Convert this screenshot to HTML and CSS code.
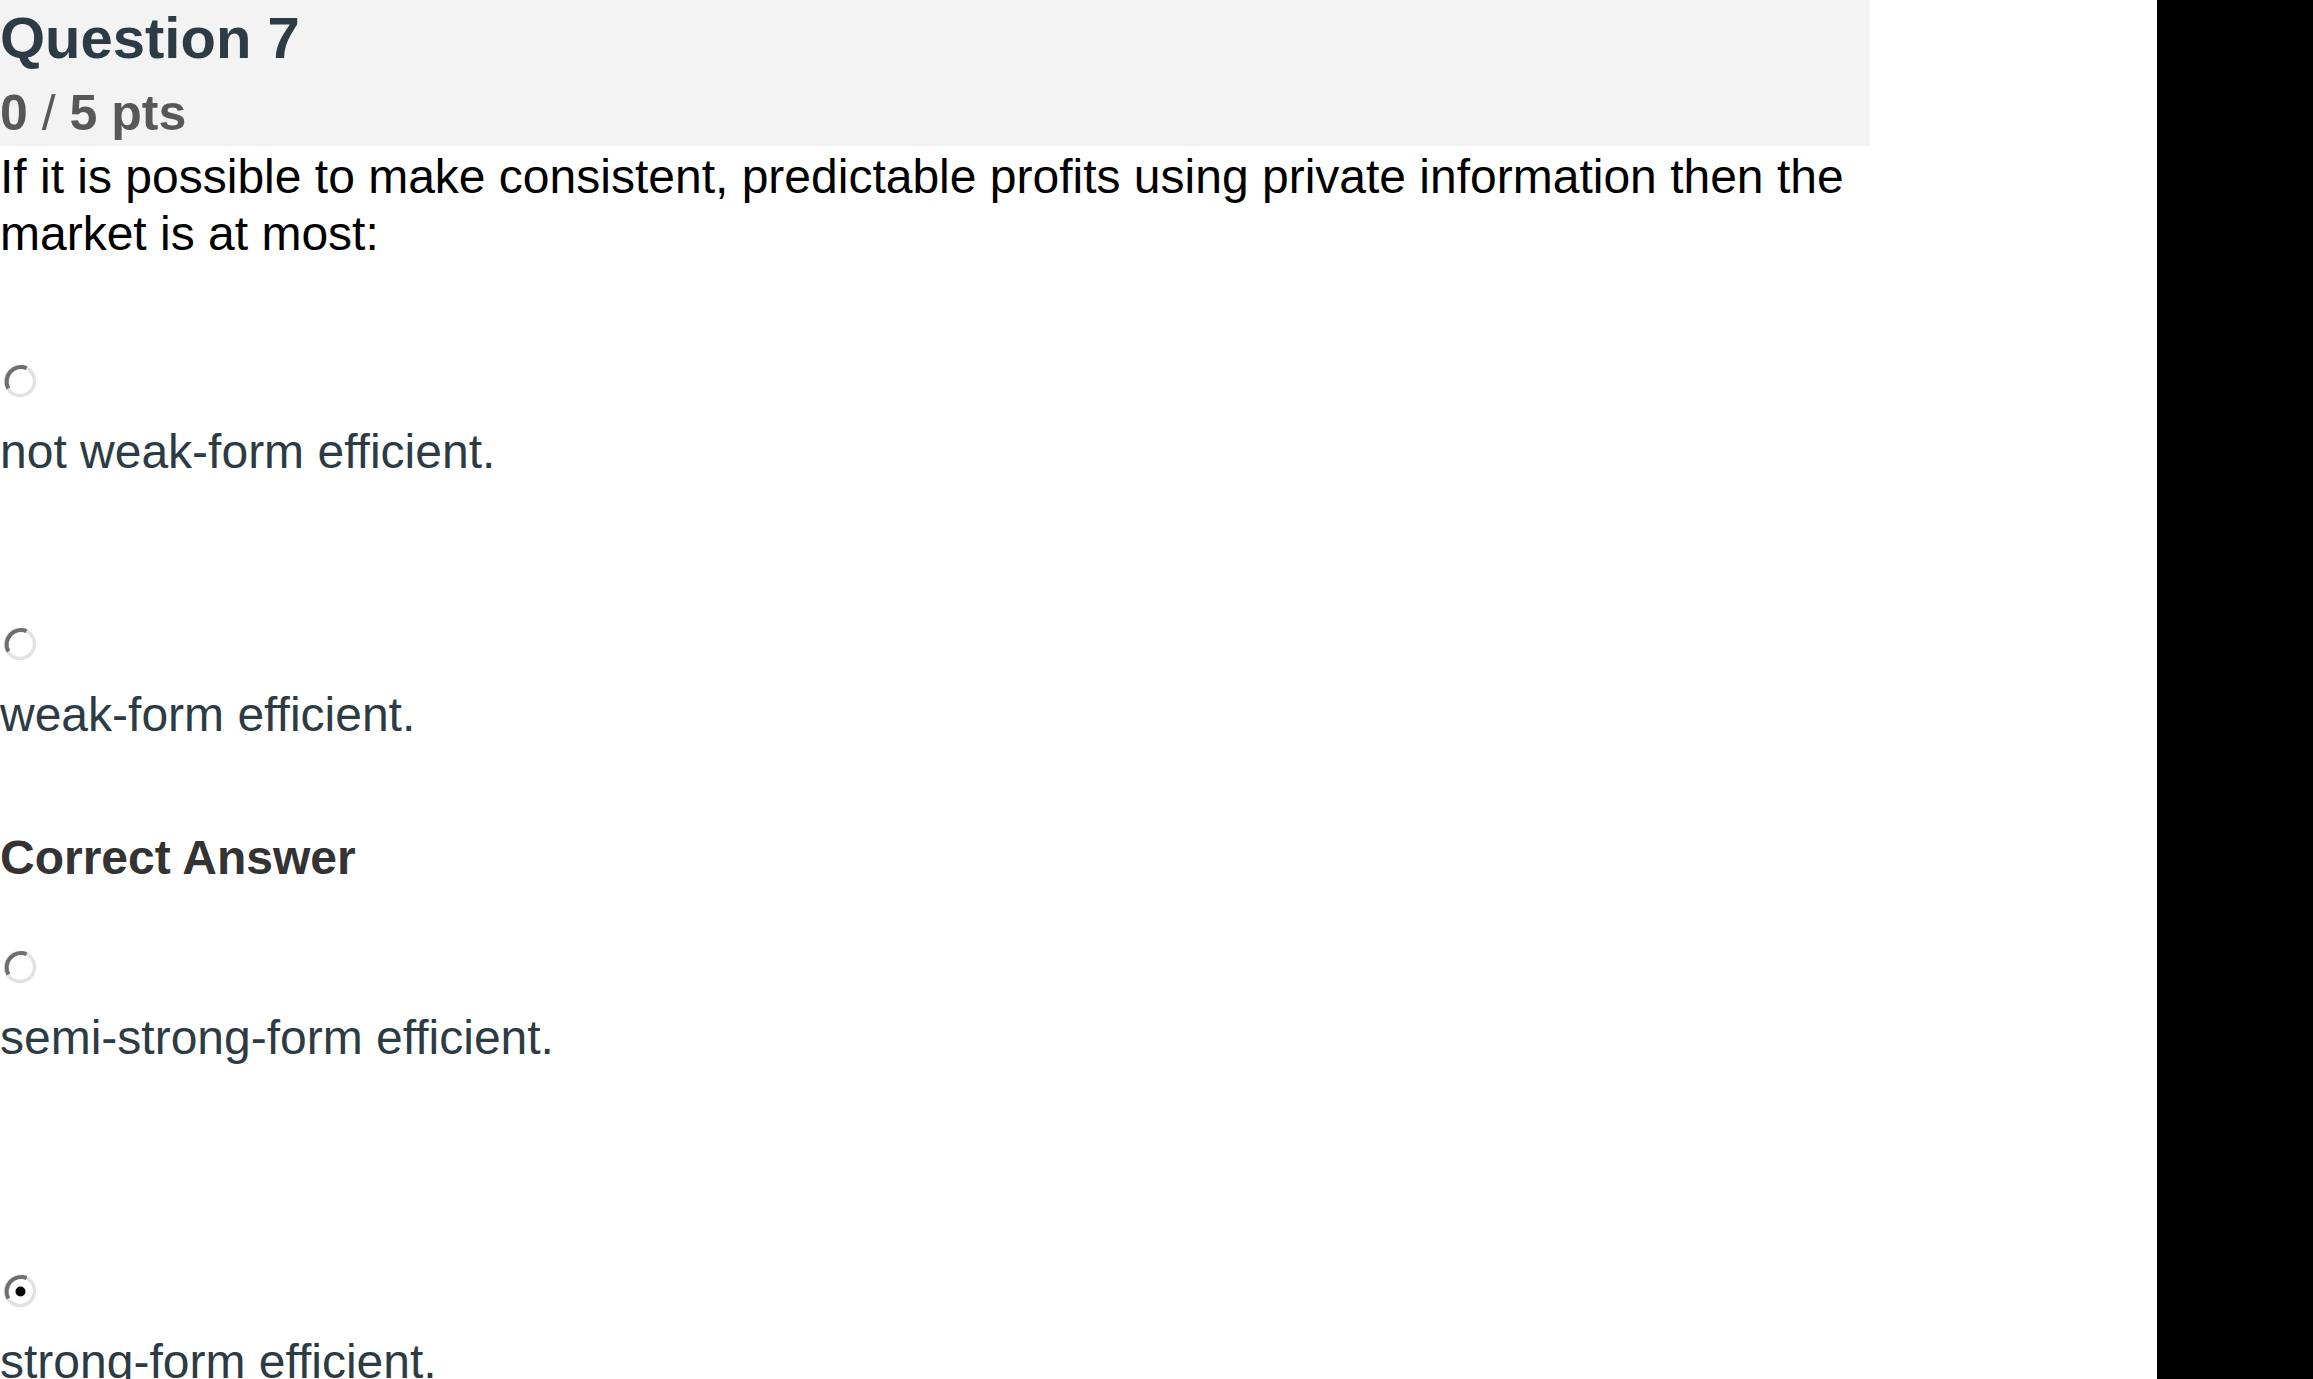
FILE: index.html
```html
<!DOCTYPE html>
<html lang="en">
<head>
<meta charset="utf-8">
<title>Question 7</title>
<link rel="stylesheet" href="styles.css">
</head>
<body>
<div class="layout">
  <main class="quiz">
    <header class="q-header">
      <h2 class="q-title">Question 7</h2>
      <div class="q-points">0 <span class="slash">/</span> 5 pts</div>
    </header>
    <div class="q-text">If it is possible to make consistent, predictable profits using private information then the market is at most:</div>

    <div class="answer answer-first">
      <svg class="radio" viewBox="0 0 34 34" aria-hidden="true">
        <circle cx="17" cy="17" r="14.5" fill="#fff" stroke="#e2e2e2" stroke-width="3.5"/>
        <path d="M5.4 24.5 A14.5 14.5 0 0 1 23.6 4.1" fill="none" stroke="#6e6e6e" stroke-width="4"/>
      </svg>
      <div class="answer-label">not weak-form efficient.</div>
    </div>

    <div class="answer answer-second">
      <svg class="radio" viewBox="0 0 34 34" aria-hidden="true">
        <circle cx="17" cy="17" r="14.5" fill="#fff" stroke="#e2e2e2" stroke-width="3.5"/>
        <path d="M5.4 24.5 A14.5 14.5 0 0 1 23.6 4.1" fill="none" stroke="#6e6e6e" stroke-width="4"/>
      </svg>
      <div class="answer-label">weak-form efficient.</div>
    </div>

    <div class="correct-label">Correct Answer</div>

    <div class="answer answer-third">
      <svg class="radio" viewBox="0 0 34 34" aria-hidden="true">
        <circle cx="17" cy="17" r="14.5" fill="#fff" stroke="#e2e2e2" stroke-width="3.5"/>
        <path d="M5.4 24.5 A14.5 14.5 0 0 1 23.6 4.1" fill="none" stroke="#6e6e6e" stroke-width="4"/>
      </svg>
      <div class="answer-label">semi-strong-form efficient.</div>
    </div>

    <div class="answer answer-fourth">
      <svg class="radio" viewBox="0 0 34 34" aria-hidden="true">
        <circle cx="17" cy="17" r="14.5" fill="#fff" stroke="#e2e2e2" stroke-width="3.5"/>
        <path d="M5.4 24.5 A14.5 14.5 0 0 1 23.6 4.1" fill="none" stroke="#6e6e6e" stroke-width="4"/>
        <circle cx="17.5" cy="17.5" r="5" fill="#000"/>
      </svg>
      <div class="answer-label">strong-form efficient.</div>
    </div>
  </main>
  <aside class="side-bar"></aside>
</div>
</body>
</html>
```

FILE: styles.css
```css
html, body {
  margin: 0;
  padding: 0;
  height: 100%;
  overflow: hidden;
  background: #fff;
}

body {
  font-family: "Liberation Sans", Arial, Helvetica, sans-serif;
}

.layout {
  display: flex;
  justify-content: space-between;
  height: 100%;
}

.quiz {
  flex: 0 0 1870px;
  display: flex;
  flex-direction: column;
}

.q-header {
  background: #f3f3f3;
  padding: 3px 0 3px 0;
}

.q-title {
  margin: 0;
  font-size: 58px;
  line-height: 70px;
  font-weight: bold;
  color: #2d3b45;
}

.q-points {
  margin-top: 10px;
  font-size: 50px;
  line-height: 60px;
  font-weight: bold;
  color: #585858;
}

.slash {
  font-weight: normal;
}

.q-text {
  padding-top: 2px;
  font-size: 48px;
  line-height: 57px;
  color: #000;
}

.answer {
  display: flex;
  flex-direction: column;
  align-items: flex-start;
}

.radio {
  display: block;
  width: 34px;
  height: 34px;
  margin-left: 3px;
}

.answer-label {
  margin-top: 25px;
  font-size: 48px;
  line-height: 57px;
  color: #2d3b45;
}

.answer-first { margin-top: 102px; }
.answer-second { margin-top: 147px; }
.answer-third { margin-top: 64px; }
.answer-fourth { margin-top: 208px; }

.correct-label {
  margin-top: 86px;
  font-size: 48px;
  line-height: 57px;
  font-weight: bold;
  color: #333;
}

.side-bar {
  flex: 0 0 156px;
  background: #000;
}
```
